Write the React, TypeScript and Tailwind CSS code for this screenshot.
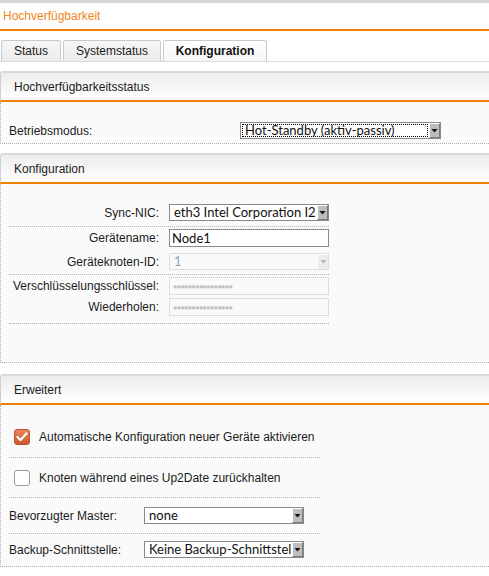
import React from "react";

const ctrlFont = { fontFamily: "Lato, 'DejaVu Sans', sans-serif" };

function Arrow({ disabled }: { disabled?: boolean }) {
  return (
    <div
      className={
        "h-full w-[11px] shrink-0 flex items-center justify-center border-l border-t border-l-white border-t-white " +
        (disabled ? "bg-[#ececec]" : "bg-[#bdbdbd] border-r border-b border-r-[#7a7a7a] border-b-[#7a7a7a]")
      }
    >
      <svg width="7" height="6" viewBox="0 0 7 6">
        <path d="M0.5 1 L6.5 1 L3.5 4.5 Z" fill={disabled ? "#b5b5b5" : "#111"} />
      </svg>
    </div>
  );
}

function Select({
  value,
  width,
  focus,
  disabled,
}: {
  value: string;
  width: number;
  focus?: boolean;
  disabled?: boolean;
}) {
  return (
    <div
      className={
        "flex h-[17px] items-stretch border " +
        (disabled ? "border-[#dedede] bg-[#fafafa]" : "border-[#8a8a8a] bg-white")
      }
      style={{ width }}
    >
      <div className="flex-1 min-w-0 p-[1px]">
        <div
          className={
            "h-full flex items-center overflow-hidden whitespace-nowrap pl-[3px] text-[13px] leading-[13px] " +
            (focus ? "outline outline-1 outline-dotted outline-black -outline-offset-1 " : "") +
            (disabled ? "text-[#8aa3b8]" : "text-[#111]")
          }
          style={ctrlFont}
        >
          {value}
        </div>
      </div>
      <Arrow disabled={disabled} />
    </div>
  );
}

function Input({ value, disabled, password }: { value?: string; disabled?: boolean; password?: boolean }) {
  return (
    <div
      className={
        "flex h-[18px] w-[160px] items-center overflow-hidden border px-[2px] " +
        (disabled ? "border-[#dcdcdc] bg-[#fafafa]" : "border-[#8a8a8a] bg-white")
      }
      style={ctrlFont}
    >
      {password ? (
        <span className="text-[7px] tracking-[-0.5px] text-[#c4c4c4] leading-none pl-[1px]">
          ●●●●●●●●●●●●●●●●
        </span>
      ) : (
        <span className="text-[13px] leading-none text-[#111]">{value}</span>
      )}
    </div>
  );
}

function PanelHeader({ title }: { title: string }) {
  return (
    <div className="h-[31px] border-t-2 border-l border-t-[#d9d9d9] border-l-[#d0d0d0] rounded-tl-[3px] bg-gradient-to-b from-[#ededed] to-white flex items-center pl-[13px] border-b-2 border-b-[#f08000]">
      <span className="text-[12px] text-[#1b1b1b]">{title}</span>
    </div>
  );
}

function Tab({ label, width, active }: { label: string; width: number; active?: boolean }) {
  return (
    <div
      className={
        "h-[21px] flex items-center justify-center border border-b-0 border-[#cacaca] rounded-t-[3px] text-[12px] " +
        (active
          ? "bg-gradient-to-b from-white to-[#f6f6f6] font-bold text-[#111]"
          : "bg-gradient-to-b from-[#f7f7f7] to-[#ebebeb] text-[#1b1b1b]")
      }
      style={{ width }}
    >
      {label}
    </div>
  );
}

function FormRow({ label, children }: { label: string; children: React.ReactNode }) {
  return (
    <div className="flex items-center">
      <div className="w-[150px] text-right text-[12px] leading-[16px] text-[#1b1b1b]">{label}</div>
      <div className="ml-[10px]">{children}</div>
    </div>
  );
}

function Checkbox({ checked }: { checked?: boolean }) {
  if (checked) {
    return (
      <div className="w-[16px] h-[16px] rounded-[3px] border border-[#b8532e] bg-gradient-to-b from-[#e8855f] to-[#c9582e] flex items-center justify-center shrink-0">
        <svg width="12" height="10" viewBox="0 0 12 10">
          <path d="M1.5 5 L4.5 8 L10.5 1.5" stroke="white" strokeWidth="2.2" fill="none" strokeLinecap="round" strokeLinejoin="round" />
        </svg>
      </div>
    );
  }
  return <div className="w-[16px] h-[16px] rounded-[3px] border border-[#9a9a9a] bg-white shrink-0" />;
}

export default function App() {
  return (
    <div
      className="w-[489px] h-[576px] overflow-hidden bg-white text-[12px] text-[#1b1b1b]"
      style={{ fontFamily: "'Liberation Sans', Arial, sans-serif" }}
    >
      <div className="h-[3px] bg-[#d5d5d5]" />
      <div className="h-[26px] flex items-center pl-[3px] text-[12px] text-[#f0861a]">Hochverfügbarkeit</div>
      <div className="h-[2px] bg-[#f08000]" />

      <div className="mt-[9px] flex items-end gap-[2px] pl-[1px] border-b border-[#dcdcdc]">
        <Tab label="Status" width={60} />
        <Tab label="Systemstatus" width={98} />
        <Tab label="Konfiguration" width={104} active />
      </div>

      {/* Hochverfügbarkeitsstatus */}
      <div className="mt-[9px]">
        <PanelHeader title="Hochverfügbarkeitsstatus" />
        <div className="bg-[#fafafa] border-l border-b border-dotted border-[#b0b0b0] pt-[20px] pb-[4px] pl-[8px]">
          <div className="flex items-center">
            <div className="w-[231px] text-[12px] leading-[16px]">Betriebsmodus:</div>
            <Select value="Hot-Standby (aktiv-passiv)" width={201} focus />
          </div>
        </div>
      </div>

      {/* Konfiguration */}
      <div className="mt-[9px]">
        <PanelHeader title="Konfiguration" />
        <div className="bg-[#fafafa] border-l border-b border-dotted border-[#b0b0b0] pl-[8px] h-[179px]">
          <div className="w-[320px]">
            <div className="pt-[20px] pb-[5px] border-b border-dotted border-[#b0b0b0]">
              <FormRow label="Sync-NIC:">
                <Select value="eth3 Intel Corporation I210 Gigabit" width={160} />
              </FormRow>
            </div>
            <div className="pt-[2px] pb-[4px] border-b border-dotted border-[#b0b0b0] flex flex-col gap-[6px]">
              <FormRow label="Gerätename:">
                <Input value="Node1" />
              </FormRow>
              <FormRow label="Geräteknoten-ID:">
                <Select value="1" width={160} disabled />
              </FormRow>
            </div>
            <div className="pt-[2px] pb-[7px] border-b border-dotted border-[#b0b0b0] flex flex-col gap-[3px]">
              <FormRow label="Verschlüsselungsschlüssel:">
                <Input disabled password />
              </FormRow>
              <FormRow label="Wiederholen:">
                <Input disabled password />
              </FormRow>
            </div>
          </div>
        </div>
      </div>

      {/* Erweitert */}
      <div className="mt-[11px]">
        <PanelHeader title="Erweitert" />
        <div className="bg-[#fafafa] border-l border-b border-dotted border-[#b0b0b0] pl-[8px] pb-[8px] leading-[16px]">
          <div className="w-[311px]">
            <div className="pt-[24px] pb-[12px] border-b border-dotted border-[#b0b0b0] flex items-center pl-[5px] gap-[9px]">
              <Checkbox checked />
              <span>Automatische Konfiguration neuer Geräte aktivieren</span>
            </div>
            <div className="pt-[12px] pb-[11px] border-b border-dotted border-[#b0b0b0] flex items-center pl-[5px] gap-[9px]">
              <Checkbox />
              <span>Knoten während eines Up2Date zurückhalten</span>
            </div>
            <div className="pt-[9px] pb-[9px] border-b border-dotted border-[#b0b0b0] flex items-center">
              <div className="w-[135px]">Bevorzugter Master:</div>
              <Select value="none" width={160} />
            </div>
            <div className="pt-[7px] flex items-center">
              <div className="w-[135px]">Backup-Schnittstelle:</div>
              <Select value="Keine Backup-Schnittstelle" width={160} />
            </div>
          </div>
        </div>
      </div>
    </div>
  );
}
